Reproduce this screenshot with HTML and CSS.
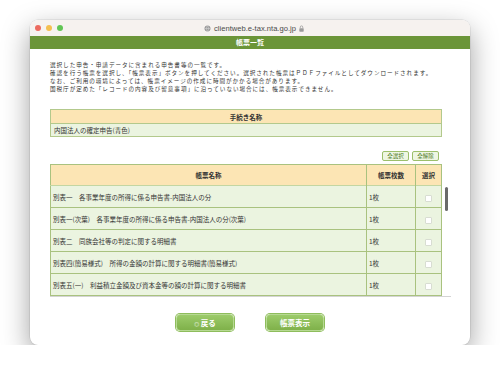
FILE: index.html
```html
<!DOCTYPE html>
<html lang="ja">
<head>
    <meta charset="UTF-8">
    <meta name="viewport" content="width=device-width, initial-scale=1.0">
    <title>帳票一覧</title>

    <link rel="stylesheet" href="styles.css">
</head>

<body>
  <div class="window">
    <div class="titlebar">
      <div class="lights">
        <span class="light red"></span>
        <span class="light yellow"></span>
        <span class="light green"></span>
      </div>
      <div class="address">
        <svg class="globe" width="7" height="7" viewBox="0 0 10 10"><circle cx="5" cy="5" r="4.3" fill="#9a9a9a"/><path d="M1 5h8M5 0.8c-2 2.5-2 5.9 0 8.4M5 0.8c2 2.5 2 5.9 0 8.4" stroke="#d8d8d8" stroke-width="0.8" fill="none"/></svg>
        <span>clientweb.e-tax.nta.go.jp</span>
        <svg class="lock" width="5" height="7" viewBox="0 0 8 11"><path d="M2 5V3.3a2 2 0 0 1 4 0V5" stroke="#9a9a9a" stroke-width="1.2" fill="none"/><rect x="0.5" y="5" width="7" height="5.5" rx="1" fill="#9a9a9a"/></svg>
      </div>
    </div>

    <div class="pagehead">帳票一覧</div>

    <div class="content">
      <p class="intro">
        選択した申告・申請データに含まれる申告書等の一覧です。<br>
        確認を行う帳票を選択し、「帳票表示」ボタンを押してください。選択された帳票はＰＤＦファイルとしてダウンロードされます。<br>
        なお、ご利用の環境によっては、帳票イメージの作成に時間がかかる場合があります。<br>
        国税庁が定めた「レコードの内容及び留意事項」に沿っていない場合には、帳票表示できません。
      </p>

      <table class="proc">
        <tr><th>手続き名称</th></tr>
        <tr><td>内国法人の確定申告(青色)</td></tr>
      </table>

      <div class="tools">
        <button class="mini">全選択</button>
        <button class="mini">全解除</button>
      </div>

      <div class="forms">
        <table class="list head">
          <colgroup><col class="c-name"><col class="c-count"><col class="c-sel"></colgroup>
          <tr><th>帳票名称</th><th>帳票枚数</th><th>選択</th></tr>
        </table>
        <div class="scroller">
          <table class="list body">
            <colgroup><col class="c-name"><col class="c-count"><col class="c-sel"></colgroup>
            <tr><td>別表一　各事業年度の所得に係る申告書-内国法人の分</td><td>1枚</td><td class="sel"><span class="box"></span></td></tr>
            <tr><td>別表一(次葉)　各事業年度の所得に係る申告書-内国法人の分(次葉)</td><td>1枚</td><td class="sel"><span class="box"></span></td></tr>
            <tr><td>別表二　同族会社等の判定に関する明細書</td><td>1枚</td><td class="sel"><span class="box"></span></td></tr>
            <tr><td>別表四(簡易様式)　所得の金額の計算に関する明細書(簡易様式)</td><td>1枚</td><td class="sel"><span class="box"></span></td></tr>
            <tr><td>別表五(一)　利益積立金額及び資本金等の額の計算に関する明細書</td><td>1枚</td><td class="sel"><span class="box"></span></td></tr>
          </table>
          <div class="track"><div class="thumb"></div></div>
        </div>
      </div>

      <div class="actions">
        <button class="big"><span class="back">◎</span> 戻る</button>
        <button class="big">帳票表示</button>
      </div>
    </div>
  </div>
</body>
</html>
```

FILE: styles.css
```css
body {
  margin: 0;
  padding: 20px 0 0 30px;
  background-color: #ffffff;
  font-family: "Noto Sans CJK JP", "Liberation Sans", sans-serif;
}

.window {
  width: 440px;
  height: 325px;
  background: #ffffff;
  border-radius: 8px;
  overflow: hidden;
  box-shadow: 0 10px 28px rgba(0, 0, 0, 0.38), 0 0 0 0.5px rgba(0, 0, 0, 0.12);
}

.titlebar {
  height: 16px;
  background: #f6f2ef;
  display: flex;
  align-items: center;
  position: relative;
}

.lights {
  display: flex;
  gap: 5px;
  padding-left: 5px;
}

.light {
  width: 6px;
  height: 6px;
  border-radius: 50%;
}
.red { background: #ec6a5e; }
.yellow { background: #f4bf4f; }
.green { background: #61c554; }

.address {
  position: absolute;
  left: 0;
  right: 0;
  top: 0;
  height: 16px;
  display: flex;
  justify-content: center;
  align-items: center;
  gap: 3px;
  font-family: "Liberation Sans", sans-serif;
  font-size: 7.6px;
  color: #4a4a4a;
  padding-left: 8px;
}

.pagehead {
  height: 13px;
  line-height: 13px;
  background: #6b9538;
  color: #ffffff;
  text-align: center;
  font-size: 7px;
  font-weight: bold;
}

.content {
  padding: 12px 0 0 20px;
}

.intro {
  margin: 0;
  font-size: 5.6px;
  line-height: 8.1px;
  color: #333333;
  letter-spacing: 0.95px;
  white-space: nowrap;
}

.proc {
  margin-top: 16px;
  width: 392px;
  border-collapse: collapse;
  font-size: 6.5px;
  color: #333333;
}

.proc th,
.proc td {
  border: 1px solid #b3c98c;
  padding: 0 3px;
}

.proc th {
  height: 13px;
  background: #fce5b4;
  font-weight: bold;
}

.proc td {
  height: 12px;
  background: #ebf4e0;
}

.tools {
  width: 389px;
  display: flex;
  justify-content: flex-end;
  gap: 3px;
  margin-top: 14px;
}

.mini {
  width: 27px;
  height: 10px;
  padding: 0;
  font-family: inherit;
  font-size: 5.5px;
  line-height: 8px;
  color: #4c7a25;
  background: #eef6e3;
  border: 1px solid #9cbf6c;
  border-radius: 2px;
}

.forms {
  margin-top: 3px;
  width: 401px;
}

.list {
  width: 391px;
  table-layout: fixed;
  border-collapse: collapse;
  font-size: 6.5px;
  color: #333333;
}

.c-name { width: 316px; }
.c-count { width: 49px; }
.c-sel { width: 26px; }

.list th,
.list td {
  border: 1px solid #a9c27f;
  padding: 0 2px;
  white-space: nowrap;
  overflow: hidden;
}

.list th {
  height: 20px;
  background: #fce5b4;
  font-weight: bold;
}

.head th { border-bottom: none; }

.body td {
  height: 21px;
  background: #ebf4e0;
}

.body tr:first-child td { border-top-color: #c3d6a2; }

.sel { text-align: center; }

.box {
  display: inline-block;
  width: 5px;
  height: 5px;
  background: #ffffff;
  border: 0.5px solid #d8ddd2;
  border-radius: 1px;
  vertical-align: middle;
}

.scroller {
  display: flex;
  border-bottom: 1px solid #d4d4d4;
}

.track {
  flex: 1;
  display: flex;
  justify-content: center;
}

.thumb {
  width: 3px;
  height: 24px;
  margin-top: 2px;
  background: #6a6a6a;
  border-radius: 2px;
}

.actions {
  width: 400px;
  display: flex;
  justify-content: center;
  gap: 32px;
  margin-top: 17px;
}

.big {
  width: 58px;
  height: 17px;
  padding: 0;
  font-family: inherit;
  font-size: 7.5px;
  font-weight: bold;
  color: #ffffff;
  background: linear-gradient(#9ccb6a, #7fb14a);
  border: 1px solid #b7d993;
  border-radius: 4px;
  box-shadow: 0 0 0 1px #8ebd5c;
}

.back {
  font-size: 5px;
  font-weight: normal;
}
```
